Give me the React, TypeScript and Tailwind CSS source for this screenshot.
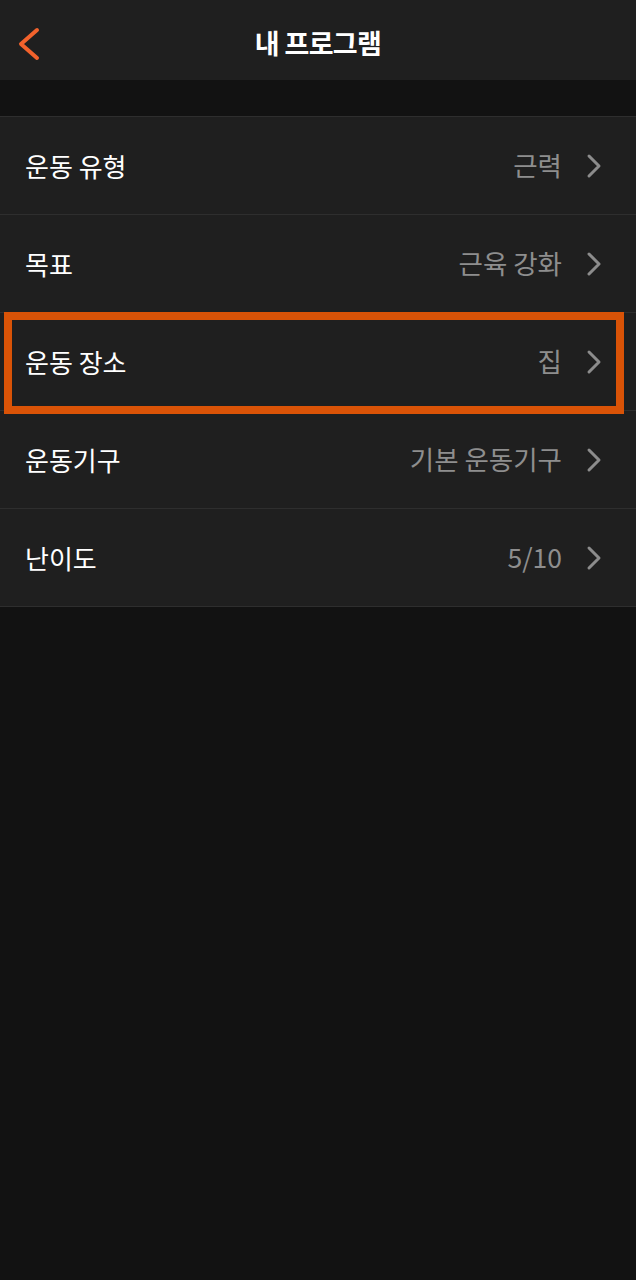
import { Fragment } from "react";

type Row = {
  label: string;
  value: string;
  selected?: boolean;
};

const rows: Row[] = [
  { label: "운동 유형", value: "근력" },
  { label: "목표", value: "근육 강화" },
  { label: "운동 장소", value: "집", selected: true },
  { label: "운동기구", value: "기본 운동기구" },
  { label: "난이도", value: "5/10" },
];

const font = {
  fontFamily: '"Noto Sans CJK KR", "Noto Sans", sans-serif',
};

function Chevron() {
  return (
    <svg width="16" height="26" viewBox="0 0 16 26" fill="none">
      <path
        d="M3 3 L13 13 L3 23"
        stroke="#8c8c8c"
        strokeWidth="3"
        strokeLinecap="round"
        strokeLinejoin="round"
      />
    </svg>
  );
}

const App = () => {
  return (
    <div className="min-h-[1280px] w-[636px] bg-[#121212] text-white" style={font}>
      {/* header */}
      <div className="relative flex h-20 items-center justify-center bg-[#1f1f1f]">
        <button className="absolute left-[14px] top-[26px]">
          <svg width="30" height="36" viewBox="0 0 30 36" fill="none">
            <path
              d="M23 4 L7 18 L23 32"
              stroke="#f2622c"
              strokeWidth="4"
              strokeLinecap="round"
              strokeLinejoin="round"
            />
          </svg>
        </button>
        <h1 className="mt-[5px] text-[27px] font-bold leading-none tracking-tight">내 프로그램</h1>
      </div>

      <div className="h-9" />

      <div className="border-t border-[#2e2e2e] bg-[#1f1f1f]">
        {rows.map((row) => (
          <Fragment key={row.label}>
            <div className="relative flex h-[98px] items-center border-b border-[#2e2e2e] pl-[25px] pr-[34px]">
              <span className="text-[26px] leading-none">{row.label}</span>
              <span className="ml-auto mr-[24px] text-[26.5px] leading-none text-[#8e8e8e]">
                {row.value}
              </span>
              <Chevron />
              {row.selected && (
                <div className="pointer-events-none absolute left-1 right-3 top-[-1px] bottom-[-4px] border-8 border-[#d95307]" />
              )}
            </div>
          </Fragment>
        ))}
      </div>
    </div>
  );
};

export default App;
